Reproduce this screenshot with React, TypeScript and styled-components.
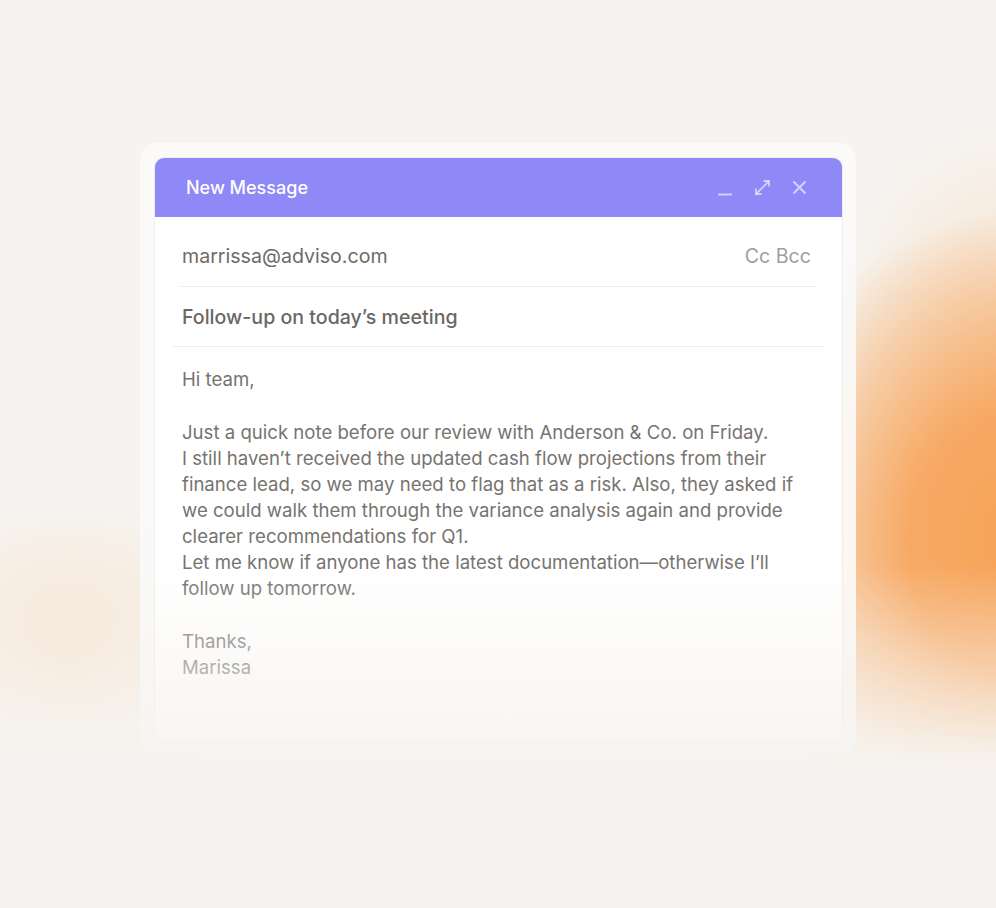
import styled, { createGlobalStyle } from "styled-components"

const bg = "#f6f4f0"

const Global = createGlobalStyle`
  body {
    margin: 0;
    background: ${bg};
    font-family: Inter, "Noto Sans", sans-serif;
  }
`

//#region CSS
const Page = styled.div`
  position: relative;
  width: 996px;
  height: 908px;
  overflow: hidden;
  padding: 143px 0 0 140px;
  box-sizing: border-box;
  background:
    radial-gradient(ellipse 280px 330px at 1020px 540px, #f7a256 0%, rgba(247, 164, 90, 0.92) 40%, rgba(247, 164, 90, 0.45) 72%, rgba(247, 164, 90, 0) 100%),
    radial-gradient(ellipse 180px 220px at 1010px 340px, rgba(247, 176, 112, 0.28) 0%, rgba(247, 176, 112, 0) 100%),
    radial-gradient(ellipse 190px 150px at 70px 650px, rgba(248, 222, 198, 0.75) 0%, rgba(248, 222, 198, 0) 100%),
    ${bg};
`

const Frame = styled.div`
  width: 716px;
  height: 612px;
  box-sizing: border-box;
  padding: 15px 14px 0 15px;
  border-radius: 16px;
  background: rgba(251, 250, 248, 0.92);
`

const Window = styled.div`
  height: 584px;
  border-radius: 9px;
  overflow: hidden;
  background: #fff;
  box-shadow: 0 0 0 1px rgba(230, 226, 220, 0.5);
`

const Header = styled.div`
  display: flex;
  align-items: center;
  justify-content: space-between;
  height: 59px;
  padding: 0 35px 0 31px;
  background: #8f88f7;
`

const Title = styled.div`
  color: #fff;
  font-size: 18px;
  font-weight: 500;
`

const Tools = styled.div`
  display: flex;
  align-items: center;
  gap: 21px;
  color: rgba(236, 234, 255, 0.72);
`

const Row = styled.div<{ inset: number; height: number; shift: number }>`
  display: flex;
  align-items: center;
  justify-content: space-between;
  box-sizing: border-box;
  height: ${({ height }) => height}px;
  margin: 0 ${({ inset }) => inset}px;
  padding: ${({ shift }) => shift}px ${({ inset }) => 31 - inset}px 0 ${({ inset }) => 27 - inset}px;
  border-bottom: 1px solid #efede9;
  font-size: 19.6px;
`

const Address = styled.span`
  color: #6f6b67;
`

const CopyLinks = styled.span`
  color: #a29e9a;
`

const Subject = styled.span`
  color: #6b6762;
  font-weight: 500;
`

const Body = styled.div`
  padding: 19px 27px 0;
  color: #77736f;
  font-size: 18.6px;
  line-height: 26px;
`

const Para = styled.div`
  margin: 0 0 27px;
  white-space: nowrap;
`

const Fade = styled.div`
  position: absolute;
  left: 0;
  right: 0;
  top: 565px;
  height: 343px;
  background: linear-gradient(
    to bottom,
    rgba(246, 244, 240, 0) 0%,
    rgba(246, 244, 240, 0.4) 25%,
    rgba(246, 244, 240, 0.7) 45%,
    ${bg} 60%
  );
  pointer-events: none;
`
//#endregion

function MinimizeIcon() {
  return (
    <svg width="16" height="16" viewBox="0 0 16 16" fill="none">
      <path d="M1 14.5h14" stroke="currentColor" strokeWidth="2" />
    </svg>
  )
}

function ExpandIcon() {
  return (
    <svg width="17" height="17" viewBox="0 0 17 17" fill="none" stroke="currentColor" strokeWidth="1.8">
      <path d="M2 15 15 2" />
      <path d="M9.5 2H15v5.5" />
      <path d="M2 9.5V15h5.5" />
    </svg>
  )
}

function CloseIcon() {
  return (
    <svg width="15" height="15" viewBox="0 0 15 15" fill="none" stroke="currentColor" strokeWidth="2.2">
      <path d="M1.5 1.5l12 12M13.5 1.5l-12 12" />
    </svg>
  )
}

const lines = [
  "Just a quick note before our review with Anderson & Co. on Friday.",
  "I still haven’t received the updated cash flow projections from their",
  "finance lead, so we may need to flag that as a risk. Also, they asked if",
  "we could walk them through the variance analysis again and provide",
  "clearer recommendations for Q1.",
  "Let me know if anyone has the latest documentation—otherwise I’ll",
  "follow up tomorrow.",
]

export default function App() {
  return (
    <Page>
      <Global />
      <Frame>
        <Window>
          <Header>
            <Title>New Message</Title>
            <Tools>
              <MinimizeIcon />
              <ExpandIcon />
              <CloseIcon />
            </Tools>
          </Header>
          <Row inset={25} height={70} shift={8}>
            <Address>marrissa@adviso.com</Address>
            <CopyLinks>Cc Bcc</CopyLinks>
          </Row>
          <Row inset={18} height={60} shift={0}>
            <Subject>Follow-up on today’s meeting</Subject>
          </Row>
          <Body>
            <Para>Hi team,</Para>
            <Para>
              {lines.map((line, i) => (
                <div key={i}>{line}</div>
              ))}
            </Para>
            <Para>
              <div>Thanks,</div>
              <div>Marissa</div>
            </Para>
          </Body>
        </Window>
      </Frame>
      <Fade />
    </Page>
  )
}
